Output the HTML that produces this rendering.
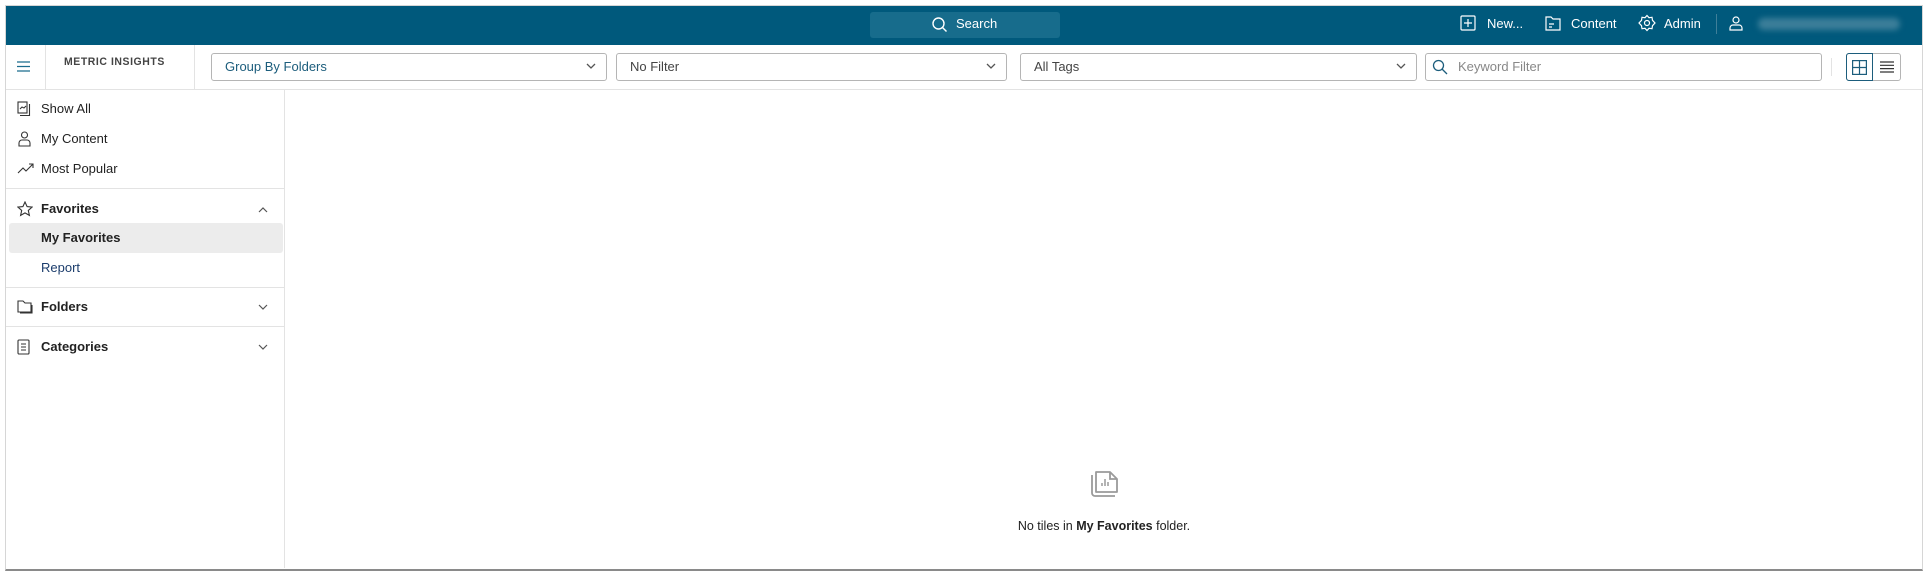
<!DOCTYPE html>
<html><head><meta charset="utf-8"><style>
*{box-sizing:border-box;margin:0;padding:0}
body{width:1928px;height:573px;background:#fff;font-family:"Liberation Sans",sans-serif;font-size:13px;color:#222;position:relative;overflow:hidden}
.frame{position:absolute;left:5px;top:5px;width:1918px;height:566px;border:1px solid #d6d6d6;border-bottom:2px solid #8a8a8a}
.top{position:absolute;left:6px;top:6px;width:1916px;height:39px;background:#00597c}
.abs{position:absolute}
.w{color:#fff;font-size:13px}
.dd{position:absolute;top:53px;height:28px;border:1px solid #b5b5b5;border-radius:3px;padding:0 13px;line-height:26px;font-size:13px;color:#444}
.dd svg{position:absolute;right:10px;top:9px}
.side{position:absolute;left:6px;top:90px;width:279px;height:478px;border-right:1px solid #e3e3e3}
.it{position:absolute;left:0;width:279px;height:30px;line-height:30px;padding-left:35px;font-size:13px;color:#222}
.it svg{position:absolute;left:11px;top:7px}
.hr{position:absolute;left:0;width:279px;height:1px;background:#e3e3e3}
.b{font-weight:bold}
</style></head><body>
<div class="frame"></div>
<div class="top"></div>
<div class="abs" style="left:870px;top:12px;width:190px;height:26px;background:#176c8c;border-radius:3px"></div>
<svg class="abs" style="left:931px;top:16px" width="18" height="18" viewBox="0 0 18 18" fill="none" stroke="#fff" stroke-width="1.4"><circle cx="7.5" cy="7.5" r="5.5"/><path d="M11.5 11.5l4 4"/></svg>
<div class="abs w" style="left:956px;top:16px">Search</div>
<svg class="abs" style="left:1460px;top:15px" width="16" height="16" viewBox="0 0 16 16" fill="none" stroke="#fff" stroke-width="1.2"><rect x="1" y="1" width="14" height="14" rx="1"/><path d="M8 4v8M4 8h8"/></svg>
<div class="abs w" style="left:1487px;top:16px">New...</div>
<svg class="abs" style="left:1545px;top:15px" width="16" height="16" viewBox="0 0 16 16" fill="none" stroke="#fff" stroke-width="1.2"><path d="M1 2h5l2 2h7v11H1z"/><path d="M4 9h5M4 12h3"/></svg>
<div class="abs w" style="left:1571px;top:16px">Content</div>
<svg class="abs" style="left:1638px;top:14px" width="18" height="18" viewBox="0 0 18 18" fill="none" stroke="#fff" stroke-width="1.2"><circle cx="9" cy="9" r="2.5"/><path d="M9 1.5l2 2.2 3-.4.5 3L17 9l-2.5 2.7-.5 3-3-.4-2 2.2-2-2.2-3 .4-.5-3L1 9l2.5-2.7.5-3 3 .4z"/></svg>
<div class="abs w" style="left:1664px;top:16px">Admin</div>
<div class="abs" style="left:1716px;top:14px;width:1px;height:20px;background:#3f7f99"></div>
<svg class="abs" style="left:1728px;top:15px" width="16" height="16" viewBox="0 0 16 16" fill="none" stroke="#fff" stroke-width="1.2"><circle cx="8" cy="5" r="3"/><path d="M2 15v-2a3 3 0 013-3h6a3 3 0 013 3v2z"/></svg>
<div class="abs" style="left:1758px;top:18px;width:142px;height:12px;background:#3b7e99;border-radius:6px;filter:blur(3px)"></div>

<svg class="abs" style="left:17px;top:61px" width="13" height="11" viewBox="0 0 13 11" stroke="#1a6c8e" stroke-width="1.3"><path d="M0 1h13M0 5.5h13M0 10h13"/></svg>
<div class="abs" style="left:45px;top:45px;width:1px;height:44px;background:#e3e3e3"></div>
<div class="abs" style="left:64px;top:56px;font-size:11px;font-weight:bold;letter-spacing:0.6px;color:#444;transform:scaleX(0.95);transform-origin:left">METRIC INSIGHTS</div>
<div class="abs" style="left:194px;top:45px;width:1px;height:44px;background:#e3e3e3"></div>
<div class="abs" style="left:6px;top:89px;width:1916px;height:1px;background:#e3e3e3"></div>

<div class="dd" style="left:211px;width:396px;color:#1c5d7c">Group By Folders<svg width="10" height="7" viewBox="0 0 10 7" fill="none" stroke="#555" stroke-width="1.3"><path d="M1 1l4 4 4-4"/></svg></div>
<div class="dd" style="left:616px;width:391px">No Filter<svg width="10" height="7" viewBox="0 0 10 7" fill="none" stroke="#555" stroke-width="1.3"><path d="M1 1l4 4 4-4"/></svg></div>
<div class="dd" style="left:1020px;width:397px">All Tags<svg width="10" height="7" viewBox="0 0 10 7" fill="none" stroke="#555" stroke-width="1.3"><path d="M1 1l4 4 4-4"/></svg></div>
<div class="dd" style="left:1425px;width:397px;padding-left:32px;color:#888">Keyword Filter</div>
<svg class="abs" style="left:1432px;top:59px" width="16" height="16" viewBox="0 0 16 16" fill="none" stroke="#1c5d7c" stroke-width="1.3"><circle cx="6.5" cy="6.5" r="5"/><path d="M10 10l5 5"/></svg>
<div class="abs" style="left:1831px;top:58px;width:1px;height:18px;background:#e3e3e3"></div>
<div class="abs" style="left:1846px;top:53px;width:55px;height:28px;border:1px solid #b5b5b5;border-radius:3px"></div>
<div class="abs" style="left:1846px;top:53px;width:27px;height:28px;border:1px solid #1c5d7c;border-radius:3px 0 0 3px"></div>
<svg class="abs" style="left:1852px;top:60px" width="15" height="15" viewBox="0 0 15 15" fill="none" stroke="#1c5d7c" stroke-width="1.2"><rect x=".6" y=".6" width="13.8" height="13.8"/><path d="M7.5 0v15M0 7.5h15"/></svg>
<svg class="abs" style="left:1880px;top:61px" width="14" height="12" viewBox="0 0 14 12" stroke="#333" stroke-width="1.2"><path d="M0 1h14M0 4.3h14M0 7.6h14M0 11h14"/></svg>

<div class="side">
<div class="it" style="top:4px"><svg width="15" height="16" viewBox="0 0 15 16" fill="none" stroke="#333" stroke-width="1.1"><rect x="1" y="1" width="9" height="11"/><path d="M3 14.5h9.5V3"/><path d="M3 8l2-2 2 1 2-2"/></svg>Show All</div>
<div class="it" style="top:34px"><svg width="15" height="16" viewBox="0 0 15 16" fill="none" stroke="#333" stroke-width="1.1"><circle cx="7.5" cy="4" r="3"/><path d="M2 15v-3a3 3 0 013-3h5a3 3 0 013 3v3z"/></svg>My Content</div>
<div class="it" style="top:64px"><svg width="17" height="14" viewBox="0 0 17 14" fill="none" stroke="#333" stroke-width="1.1"><path d="M1 12l5-5 3 3 7-7M12 3h4v4"/></svg>Most Popular</div>
<div class="hr" style="top:98px"></div>
<div class="it b" style="top:104px"><svg width="16" height="16" viewBox="0 0 16 16" fill="none" stroke="#333" stroke-width="1.1"><path d="M8 1l2.1 4.6 5 .5-3.8 3.3 1.1 5L8 11.9 3.6 14.4l1.1-5L.9 6.1l5-.5z"/></svg>Favorites<svg style="left:252px;top:12px" width="10" height="7" viewBox="0 0 10 7" fill="none" stroke="#555" stroke-width="1.2"><path d="M1 6l4-4 4 4"/></svg></div>
<div class="abs" style="left:3px;top:133px;width:274px;height:30px;background:#ececec;border-radius:3px"></div>
<div class="it b" style="top:133px">My Favorites</div>
<div class="it" style="top:163px;color:#1c3d6c">Report</div>
<div class="hr" style="top:197px"></div>
<div class="it b" style="top:202px"><svg width="16" height="15" viewBox="0 0 16 15" fill="none" stroke="#333" stroke-width="1.1"><path d="M1 2h5l2 2h6v9H1z"/><path d="M3 14h12V6"/></svg>Folders<svg style="left:252px;top:12px" width="10" height="7" viewBox="0 0 10 7" fill="none" stroke="#555" stroke-width="1.2"><path d="M1 1l4 4 4-4"/></svg></div>
<div class="hr" style="top:236px"></div>
<div class="it b" style="top:242px"><svg width="14" height="16" viewBox="0 0 14 16" fill="none" stroke="#333" stroke-width="1.1"><rect x="1" y="1" width="11" height="14" rx="1"/><path d="M4 5h5M4 8h5M4 11h5"/></svg>Categories<svg style="left:252px;top:12px" width="10" height="7" viewBox="0 0 10 7" fill="none" stroke="#555" stroke-width="1.2"><path d="M1 1l4 4 4-4"/></svg></div>
</div>

<svg class="abs" style="left:1088px;top:469px" width="32" height="30" viewBox="0 0 32 30" fill="none" stroke="#9a9a9a" stroke-width="1.8"><path d="M4 6v18a3 3 0 003 3h20"/><path d="M8 3h14l7 7v13H8z" stroke-linejoin="round"/><path d="M22 3v7h7"/><path d="M14 17v-3M17 17v-7M20 17v-4" stroke-width="1.5"/></svg>
<div class="abs" style="left:1004px;top:519px;width:200px;text-align:center;font-size:12.5px">No tiles in <b>My Favorites</b> folder.</div>
</body></html>
